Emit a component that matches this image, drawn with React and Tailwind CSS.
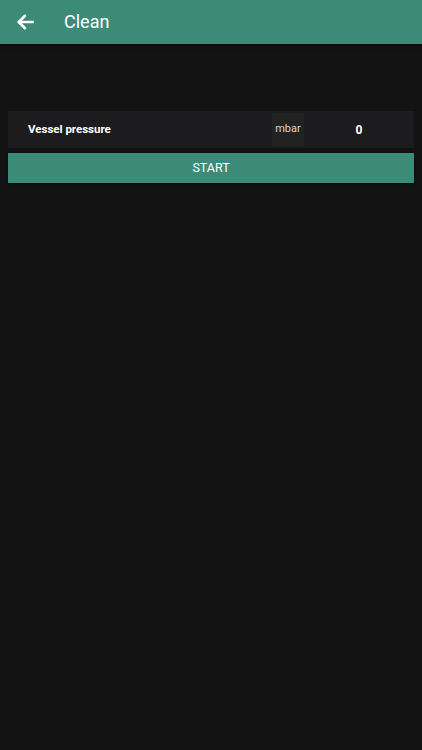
export default function App() {
  return (
    <div className="w-[422px] h-[750px] bg-[#131313] flex flex-col" style={{ fontFamily: "Roboto, 'Noto Sans', sans-serif" }}>
      <div className="h-[44px] bg-[#3b8b78] flex items-center shadow-[0_2px_4px_rgba(0,0,0,0.5)] shrink-0">
        <div className="w-[64px] flex items-center pl-[15px]">
          <svg width="20" height="20" viewBox="0 0 24 24" fill="none" stroke="white" strokeWidth="3" strokeLinecap="square">
            <path d="M21 12H5" />
            <path d="M12 4.5L4.5 12L12 19.5" strokeLinecap="round" strokeLinejoin="miter" />
          </svg>
        </div>
        <span className="text-white text-[18px] leading-none">Clean</span>
      </div>
      <div className="px-[8px] pt-[67px] flex flex-col gap-[5px]">
        <div className="h-[37px] bg-[#1c1c1e] flex items-center">
          <span className="pl-[20px] text-white text-[11.5px] font-bold flex-1">Vessel pressure</span>
          <div className="w-[32px] h-[33px] bg-[#222222] flex items-center justify-center text-[#d6d6d6] text-[11px]">mbar</div>
          <div className="w-[110px] flex items-center justify-center text-white text-[12px] font-bold">0</div>
        </div>
        <div className="h-[30px] bg-[#3b8b78] flex items-center justify-center text-white text-[12.5px] shadow-[0_1px_3px_rgba(0,0,0,0.5)]">START</div>
      </div>
    </div>
  );
}
